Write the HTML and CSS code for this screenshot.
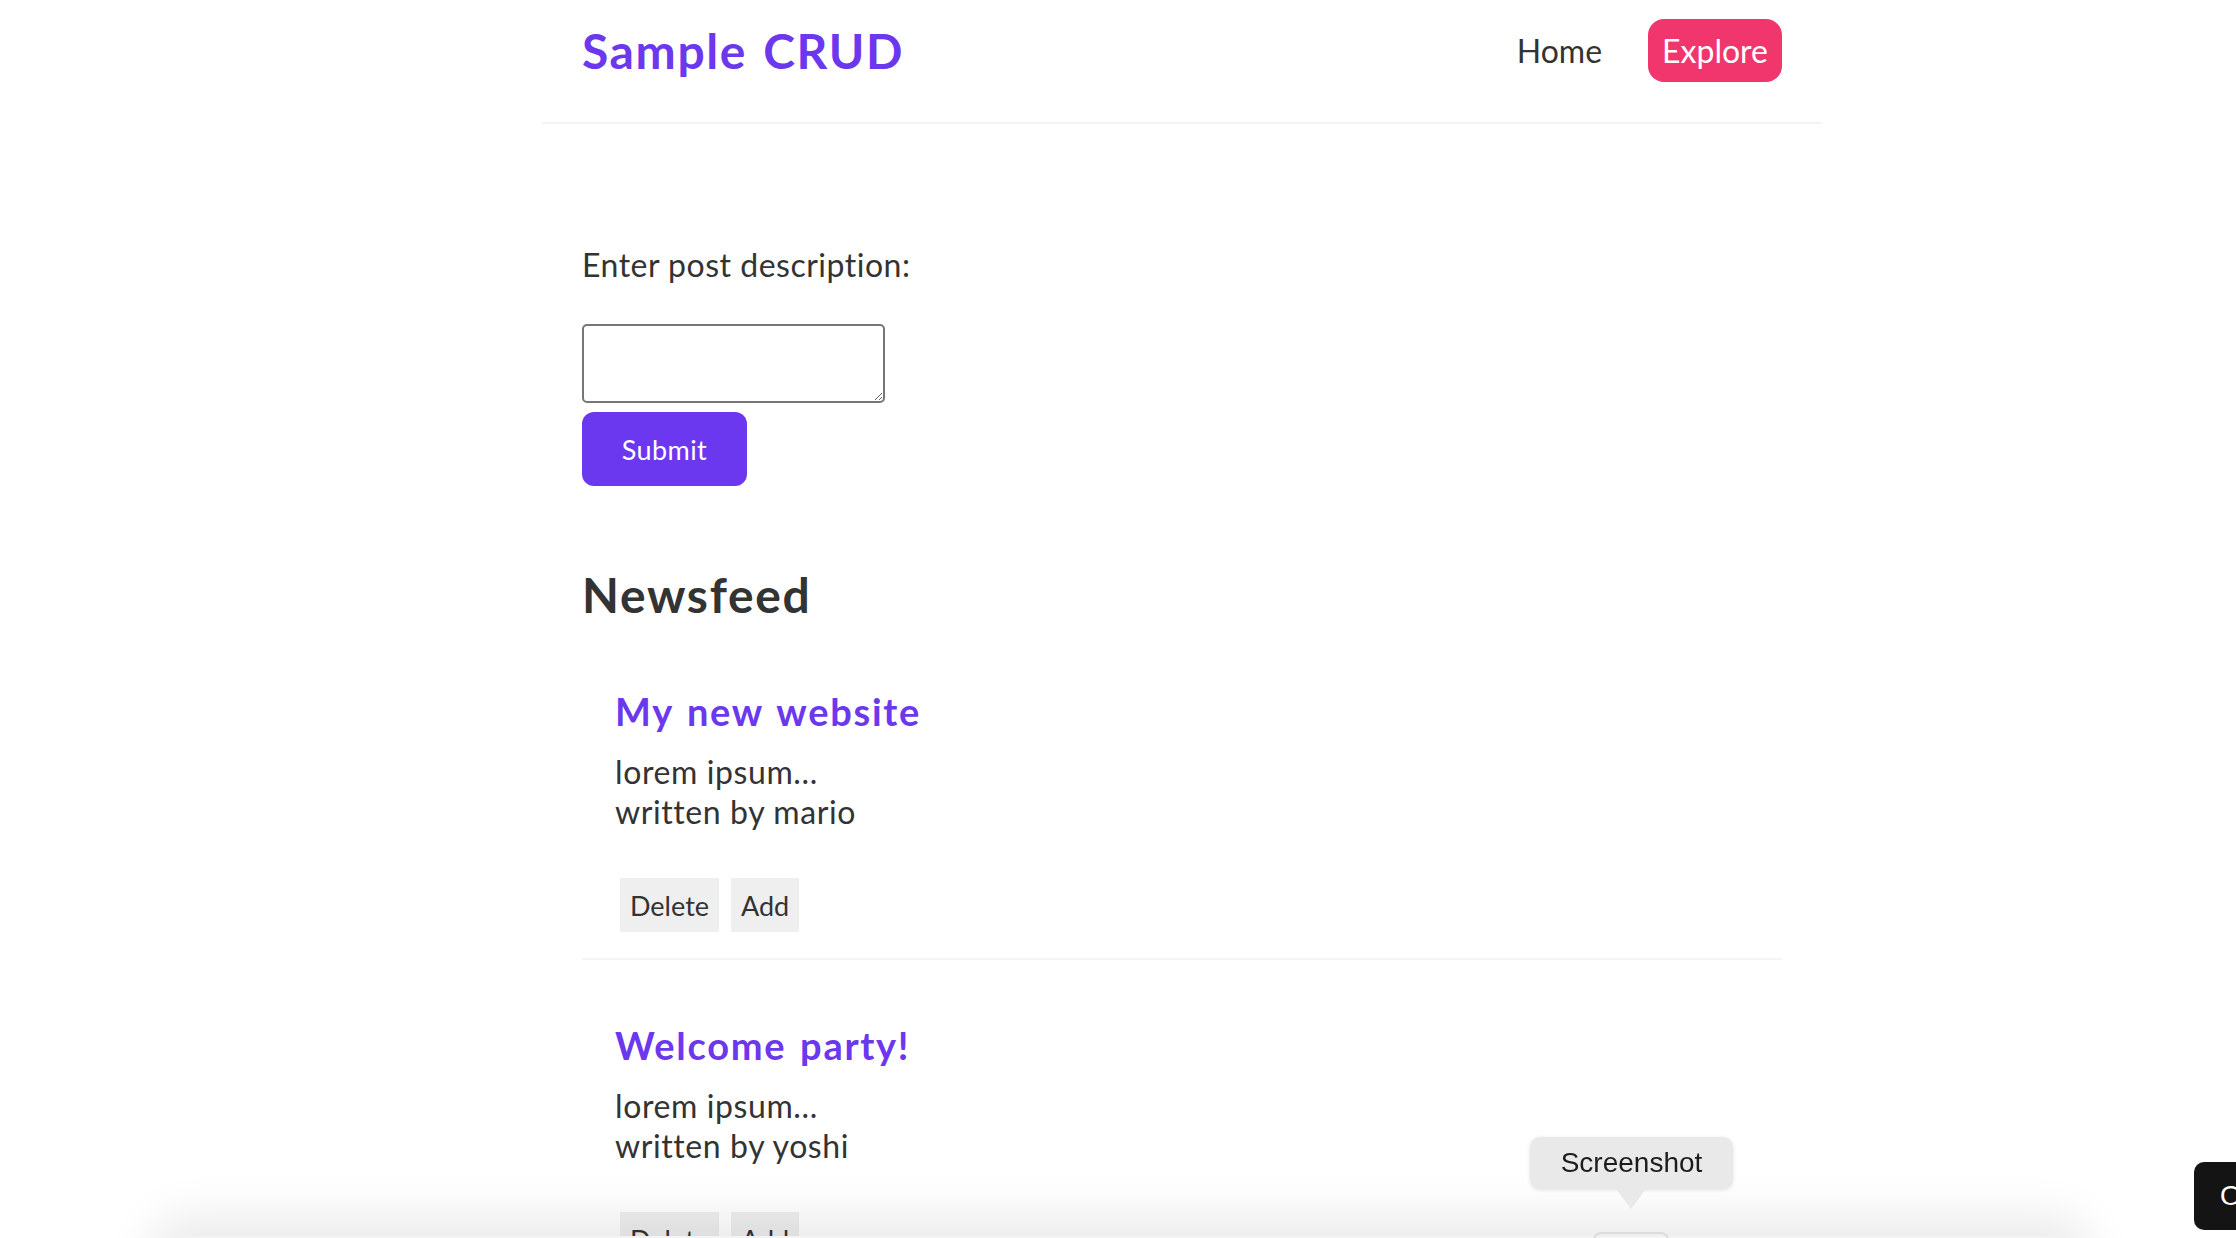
FILE: index.html
```html
<!DOCTYPE html>
<html lang="en">
<head>
<meta charset="utf-8">
<title>Sample CRUD</title>
<link rel="stylesheet" href="styles.css">
</head>
<body>
<nav class="navbar">
  <h1 class="brand">Sample CRUD</h1>
  <div class="links">
    <a href="#" class="link">Home</a>
    <a href="#" class="link link-cta">Explore</a>
  </div>
</nav>
<main class="content">
  <form class="create">
    <label class="create-label" for="desc">Enter post description:</label>
    <textarea id="desc" class="create-input"></textarea>
    <button type="button" class="submit">Submit</button>
  </form>
  <h2 class="feed-title">Newsfeed</h2>
  <div class="feed">
    <article class="post">
      <h3 class="post-title">My new website</h3>
      <p class="post-text">lorem ipsum...</p>
      <p class="post-text">written by mario</p>
      <div class="post-actions">
        <button type="button" class="btn">Delete</button>
        <button type="button" class="btn">Add</button>
      </div>
    </article>
    <article class="post">
      <h3 class="post-title">Welcome party!</h3>
      <p class="post-text">lorem ipsum...</p>
      <p class="post-text">written by yoshi</p>
      <div class="post-actions">
        <button type="button" class="btn">Delete</button>
        <button type="button" class="btn">Add</button>
      </div>
    </article>
  </div>
</main>
<div class="toolbar">
  <span class="toolbar-btn"></span>
</div>
<div class="tooltip">Screenshot</div>
<div class="options">Options</div>
</body>
</html>
```

FILE: styles.css
```css
* {
  box-sizing: border-box;
}

html, body {
  height: 100%;
}

body {
  margin: 0;
  padding-left: 128px;
  font-family: "Lato", "Liberation Sans", sans-serif;
  color: #333;
  background: #fff;
  overflow: hidden;
}

.navbar {
  max-width: 1280px;
  height: 124px;
  margin: 0 auto;
  padding: 0 40px 21px;
  display: flex;
  align-items: center;
  border-bottom: 2px solid #f2f2f2;
}

.brand {
  margin: 0;
  font-size: 48px;
  line-height: 58px;
  font-weight: 700;
  letter-spacing: 1.6px;
  word-spacing: 3px;
  color: #6b38ee;
}

.links {
  margin-left: auto;
  display: flex;
  align-items: center;
}

.link {
  font-size: 32px;
  line-height: 40px;
  color: #333;
  text-decoration: none;
}

.link-cta {
  margin-left: 46px;
  height: 63px;
  padding: 0 14px;
  display: inline-flex;
  align-items: center;
  background: #f1356d;
  color: #fff;
  border-radius: 16px;
}

.content {
  max-width: 1280px;
  margin: 0 auto;
  padding: 0 40px;
}

.create {
  padding-top: 121px;
  display: flex;
  flex-direction: column;
  align-items: flex-start;
}

.create-label {
  font-size: 32px;
  line-height: 40px;
  letter-spacing: 0.5px;
}

.create-input {
  margin-top: 39px;
  width: 303px;
  height: 79px;
  border: 2px solid #767676;
  border-radius: 5px;
  font-size: 26px;
}

.submit {
  margin-top: 9px;
  width: 165px;
  height: 74px;
  border: none;
  border-radius: 12px;
  background: #6c38ef;
  color: #fff;
  font-family: inherit;
  font-size: 27px;
  letter-spacing: 0.4px;
}

.feed-title {
  margin: 80px 0 44px;
  font-size: 48px;
  line-height: 58px;
  font-weight: 700;
  letter-spacing: 1.7px;
}

.feed {
  display: flex;
  flex-direction: column;
  gap: 42px;
}

.post {
  padding: 20px 0 26px 33px;
  border-bottom: 2px solid #f5f5f5;
}

.post-title {
  margin: 0 0 18px;
  font-size: 38px;
  line-height: 46px;
  font-weight: 700;
  letter-spacing: 1.7px;
  word-spacing: 3px;
  color: #6b38ee;
}

.post-text {
  margin: 0;
  font-size: 32px;
  line-height: 40px;
  letter-spacing: 0.6px;
}

.post-actions {
  margin-top: 46px;
  padding-left: 5px;
  display: flex;
  gap: 12px;
}

.btn {
  height: 54px;
  padding: 0 10px;
  border: none;
  background: #efefef;
  color: #333;
  font-family: inherit;
  font-size: 27px;
}

/* macOS screenshot overlay */
.toolbar {
  position: fixed;
  left: 170px;
  width: 1900px;
  top: 1236px;
  height: 80px;
  background: #f3f3f3;
  border-radius: 14px;
  box-shadow: 0 0 50px 18px rgba(0, 0, 0, 0.09);
}

.toolbar-btn {
  position: absolute;
  left: 1423px;
  top: -4px;
  width: 76px;
  height: 30px;
  border: 2px solid #dcdcdc;
  border-radius: 8px;
}

.tooltip {
  position: fixed;
  left: 1530px;
  top: 1137px;
  width: 203px;
  height: 52px;
  display: flex;
  align-items: center;
  justify-content: center;
  background: #e9e9e9;
  border-radius: 10px;
  box-shadow: 0 1px 4px rgba(0, 0, 0, 0.12);
  font-family: "Liberation Sans", sans-serif;
  font-size: 28px;
  color: #1c1c1c;
}

.tooltip::after {
  content: "";
  position: absolute;
  left: 86px;
  top: 52px;
  border-left: 15px solid transparent;
  border-right: 15px solid transparent;
  border-top: 20px solid #e9e9e9;
}

.options {
  position: fixed;
  left: 2194px;
  top: 1162px;
  height: 68px;
  padding: 0 26px;
  display: flex;
  align-items: center;
  background: #141414;
  border-radius: 10px;
  font-family: "Liberation Sans", sans-serif;
  font-size: 28px;
  color: #fff;
  white-space: nowrap;
}
```
